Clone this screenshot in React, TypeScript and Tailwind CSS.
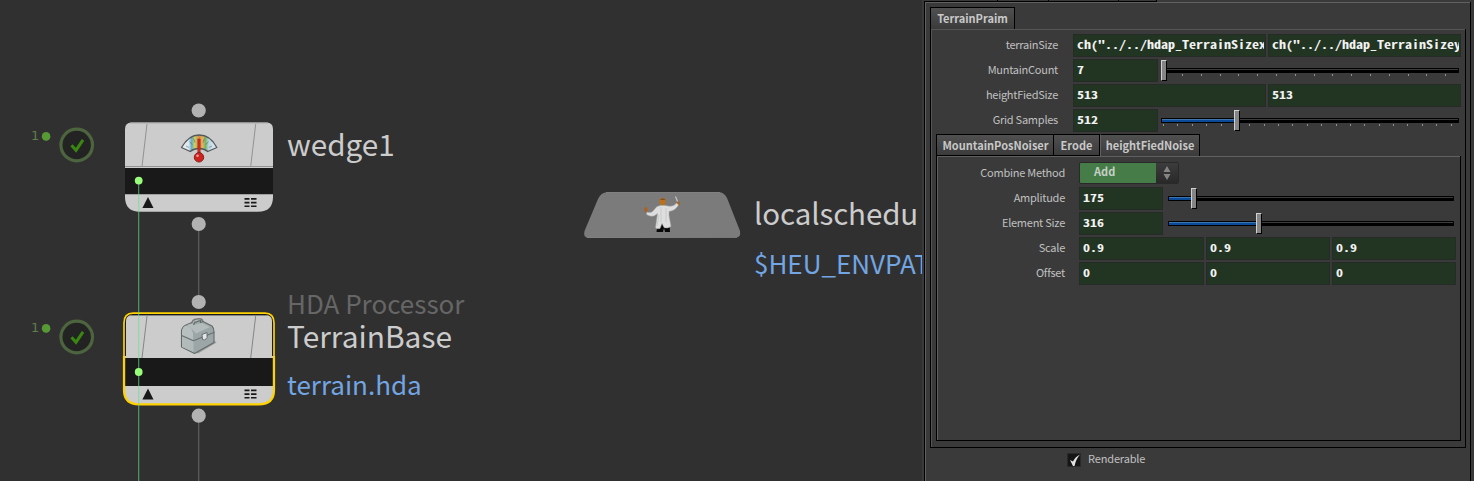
import React from "react";

const SANS = "font-['Noto_Sans_CJK_SC',sans-serif]";
const MONO = "font-['Noto_Sans_Mono_CJK_SC','DejaVu_Sans_Mono',monospace]";

function StatusBadge({ className }: { className: string }) {
  return (
    <div className={`absolute left-[30px] ${className}`}>
      <svg width="66" height="36" viewBox="0 0 66 36" className="block">
        <circle cx="16.1" cy="9.4" r="4.3" fill="#579a35" />
        <circle cx="46.7" cy="18" r="15.8" fill="#232323" stroke="#4c653f" strokeWidth="3.2" />
        <path d="M41.5 18.3 L46 23.3 L53 12.8" fill="none" stroke="#398710" strokeWidth="3" />
      </svg>
      <span className="absolute left-px top-0 font-['DejaVu_Sans',sans-serif] text-[13px] leading-[18px] text-[#5f7d4c]">1</span>
    </div>
  );
}

function GaugeIcon() {
  return (
    <g>
      <defs>
        <linearGradient id="dial" x1="0" x2="1">
          <stop offset="0" stopColor="#e8edf2" />
          <stop offset=".2" stopColor="#dfe8ee" />
          <stop offset=".29" stopColor="#65a9c4" />
          <stop offset=".37" stopColor="#c6d464" />
          <stop offset=".5" stopColor="#d9854b" />
          <stop offset=".6" stopColor="#e6b45c" />
          <stop offset=".68" stopColor="#72b66a" />
          <stop offset=".77" stopColor="#b9d5e4" />
          <stop offset="1" stopColor="#eceff3" />
        </linearGradient>
      </defs>
      <path d="M181.500 147.500 C187 138 193 135 199 135 C206 135 212 138 216.800 147.500 L207.800 151.500 C203 147.500 195 147.500 190.200 151.500 Z" fill="url(#dial)" stroke="#55595b" strokeWidth="1.300" strokeLinejoin="round" />
      <path d="M186 146 l3 1.500 M189.500 141.500 l2.500 3 M193.500 138.500 l1.500 4 M204.500 138.500 l-1.500 4 M208.500 141.500 l-2.500 3 M212 146 l-3 1.500" stroke="#3f4747" strokeWidth=".8" opacity=".55" />
      <path d="M197.800 139 h2.400 v15 h-2.400 z" fill="#d42c24" stroke="#92251f" strokeWidth=".5" />
      <circle cx="199" cy="157.300" r="4.700" fill="#cf231f" stroke="#85211f" strokeWidth="1" />
      <circle cx="197.500" cy="155.800" r="1.300" fill="#f39b91" />
    </g>
  );
}

function ToolboxIcon() {
  return (
    <g strokeLinejoin="round" transform="translate(0 .5)">
      <path d="M193 351 L214 340 L216.500 342 L198 353 Z" fill="#777" opacity=".6" />
      <path d="M192.800 325 v-2.500 q0-2.500 3-3 l3.500-.5 q3 0 3 3 v2" fill="none" stroke="#777c7c" strokeWidth="2.800" />
      <path d="M193 325 v-2.500 q0-2 3-2.500 l3-.5 q2.500 0 2.800 2" fill="none" stroke="#c1c6c6" strokeWidth="1" />
      <path d="M181.500 335 v-5 q1-4 4.500-5.500 l6-2.500 v2.500 l2.500-1 v-1.500 l6-2 v2 l2.500-1 9 4.500 q2 2 2 6 v10.500 l-19.500 11 -13-6.500 Z" fill="#9da6a6" stroke="#626b6b" strokeWidth="1.100" />
      <path d="M182 334.500 v-4.500 q1-4 4-5 q6 1 7 8 v6.500 Z" fill="#b8bfbf" />
      <path d="M187 324.500 l6-2 v2 l9-2 8 4 -14 6.500 q-4-5-9-8.500" fill="#b5bcbc" />
      <path d="M182 335.500 l11.500 5 v11 l-11.500-5 Z" fill="#b2baba" />
      <path d="M181.500 335 l12 5.300 21-8.500" fill="none" stroke="#697272" strokeWidth="1.200" />
      <path d="M202 334 l5-2 v5 q-2 4-4.500 2 Z" fill="#e3e7e7" stroke="#5c6565" strokeWidth=".9" />
    </g>
  );
}

function FooterGlyphs({ y }: { y: number }) {
  return (
    <g fill="#191919">
      <path d={`M142.400 ${y + 11} L148 ${y} L153.500 ${y + 11} Z`} />
      <path
        transform={`translate(244 ${y})`}
        d="M.5 1h5v1.700h-5z M.5 4.700h5v1.700h-5z M.5 8.400h5v1.700h-5z M7 1h5.500v1.700h-5.500z M7 4.700h5.500v1.700h-5.500z M7 8.400h5.500v1.700h-5.500z"
      />
    </g>
  );
}

function Graph() {
  return (
    <svg width="760" height="481" viewBox="0 0 760 481" className="absolute left-0 top-0">
      <path d="M198.700 224 V302 M198.700 416 V481" stroke="#5b5b5b" strokeWidth="1.300" />
      <g fill="#b2b2b2">
        <circle cx="198.700" cy="110.500" r="7.100" />
        <circle cx="198.700" cy="224" r="7.100" />
        <circle cx="198.700" cy="302" r="7.100" />
        <circle cx="198.700" cy="415.700" r="7.100" />
      </g>
      <path d="M125 168 V129 Q125 122.500 131.500 122.500 H266.500 Q273 122.500 273 129 V168 Z" fill="#cccccc" />
      <path d="M130 123 H268" stroke="#a9a9a9" />
      <path d="M147 124 L142 166.500 M255.700 124 L250.700 166.500 M125 166.500 H273" stroke="#929292" strokeWidth="1" />
      <path d="M125 168 H273 V194 H125 Z" fill="#191919" />
      <path d="M125 194.300 H273 V197 Q273 211.700 258 211.700 H140 Q125 211.700 125 197 Z" fill="#cccccc" />
      <path d="M125 194.500 H273" stroke="#a0a0a0" />
      <GaugeIcon />
      <FooterGlyphs y={197} />

      <path d="M124 357 V323 Q124 313.200 133 313.200 H265 Q274 313.200 274 323 V357" fill="#191919" stroke="#ffd200" strokeWidth="1.700" />
      <path d="M124 356 V390 Q124 404.300 139 404.300 H259 Q274 404.300 274 390 V356" fill="#cccccc" stroke="#ffd200" strokeWidth="2.200" />
      <path d="M126 358 V321 Q126 315.200 132 315.200 H266 Q272 315.200 272 321 V358 Z" fill="#cccccc" />
      <path d="M131 315.500 H267 M147 316 L142 358 M255.700 316 L250.700 358" stroke="#858585" fill="none" />
      <path d="M125.200 358 H272.800 V386 H125.200 Z" fill="#191919" />
      <ToolboxIcon />
      <FooterGlyphs y={388.500} />

      <path d="M138.700 181 V481" stroke="#69e08d" strokeOpacity=".65" strokeWidth="1.100" />
      <circle cx="138.700" cy="180.600" r="3.900" fill="#97ff79" />
      <circle cx="138.700" cy="372" r="3.900" fill="#97ff79" />

      <path d="M598 199 Q601 192.500 607 192.300 H719 Q724 192.300 727 198 L740 231 Q741 237 737 237.300 L588 237.700 Q583 237.500 584.500 231 Z" fill="#7b7b7b" />
      <path d="M606 192.500 H720 M587 237.500 H737" stroke="#8d8d8d" strokeWidth=".7" />
      <g>
        <path d="M657.500 223 h12 l.5 9 h-5 l-1-4 -1 4 h-6.500 z" fill="#080808" />
        <path d="M675.500 196.500 l2.500 6" stroke="#c3c7ca" strokeWidth="1.200" />
        <ellipse cx="678.300" cy="203.500" rx="1.800" ry="2.300" fill="#a5652b" />
        <ellipse cx="645.800" cy="209.500" rx="2" ry="2.500" fill="#a5652b" />
        <path d="M657 206.500 l5-1.500 6 1 q5.500 1 8.500-3 l2 2 q-3 5.500-9.500 6.500 l0 4 2 11 q-4 2.500-7 1 l-2-4 -2 5 q-4 1-4.500-1 l2-14 q-5 5-11 1 l.5-2.500 q4 1.500 6-1 Z" fill="#dedede" stroke="#a6a6a6" strokeWidth=".5" />
        <path d="M661 207 v15 M666 208 v14 M659 215 l-2 11" stroke="#c2c5c6" strokeWidth=".8" />
        <ellipse cx="662.500" cy="201.600" rx="3.100" ry="3.800" fill="#bb711b" />
        <path d="M659.700 200 q3-3.500 6 0 z" fill="#87511b" />
      </g>
    </svg>
  );
}

function NodeText({ className, children }: { className: string; children: string }) {
  return <span className={`absolute whitespace-nowrap leading-[32px] ${className}`}>{children}</span>;
}

function Field({ value, className }: { value: string; className: string }) {
  return (
    <div className={`flex h-[23px] shrink-0 border border-[#272b27] bg-[#223522] pr-px ${className}`}>
      <div className={`flex-1 overflow-hidden whitespace-pre pl-[2.500px] text-[11px] font-bold leading-[19px] text-[#f2f2f2] ${MONO}`}>
        <span className="inline-block origin-left scale-x-[1.272]">{value}</span>
      </div>
    </div>
  );
}

function Slider({ className, fill, ticks, pitch, start }: { className: string; fill: number; ticks?: number; pitch?: number; start?: number }) {
  return (
    <div className={`relative flex h-[23px] shrink-0 flex-col pt-[9px] ${className}`}>
      <div className="flex h-[5px] rounded-[1px] border-y border-black bg-black">
        <div className="ml-px h-[3px] border-t border-[#3c76ad] bg-[#0b4a98]" style={{ width: fill }} />
        <div className="mr-px h-px grow bg-[#3c3c3c]" />
      </div>
      {Array.from({ length: ticks ?? 0 }, (_, i) => (
        <span key={i} className="absolute top-[15px] h-[2px] w-px bg-[#929292]" style={{ left: Math.round((start ?? 0) + i * (pitch ?? 0)) }} />
      ))}
      <span className="absolute top-px h-[21px] w-[6px] border border-b-black border-l-[#d0d0d0] border-r-black border-t-[#d0d0d0] bg-[#858585]" style={{ left: fill }} />
    </div>
  );
}

function Row({ label, labelWidth, children }: { label: string; labelWidth: string; children: React.ReactNode }) {
  return (
    <div className="flex h-[25px] items-start">
      <span className={`shrink-0 text-right text-[11px] leading-[21px] tracking-[-0.25px] text-[#c0c0c0] ${labelWidth}`}>{label}</span>
      {children}
    </div>
  );
}

function Tab({ children, className }: { children: string; className: string }) {
  return (
    <div className={`flex shrink-0 items-center justify-center border-r border-t border-black bg-gradient-to-b from-[#505050] to-[#3b3b3b] text-[11px] font-bold leading-none text-[#c8c8c8] ${className}`}>
      {children}
    </div>
  );
}

export default function App() {
  return (
    <div className={`flex h-[481px] w-[1474px] overflow-hidden bg-[#303030] ${SANS}`}>
      <main className="relative h-full w-[922px] shrink-0 overflow-hidden">
        <Graph />
        <StatusBadge className="top-[127px]" />
        <StatusBadge className="top-[318.500px]" />
        <NodeText className="left-[287px] top-[128px] text-[29.700px] text-[#cccccc]">wedge1</NodeText>
        <NodeText className="left-[287px] top-[287px] text-[26px] text-[#666666]">HDA Processor</NodeText>
        <NodeText className="left-[287px] top-[319px] text-[29.900px] text-[#cccccc]">TerrainBase</NodeText>
        <NodeText className="left-[287px] top-[368px] text-[26px] text-[#73a5e3]">terrain.hda</NodeText>
        <NodeText className="left-[754px] top-[196px] text-[29.500px] tracking-[-0.1px] text-[#cccccc]">localschedu</NodeText>
        <NodeText className="left-[754px] top-[247px] text-[26px] text-[#73a5e3]">$HEU_ENVPAT</NodeText>
      </main>

      <aside className="flex h-full w-[552px] shrink-0 flex-col bg-[#3a3a3a] pl-[2px]">
        <div className="flex h-[2px] w-[233px] shrink-0 border-b border-black">
          <div className="w-[74px] border-r border-black" />
          <div className="w-[51px] border-r border-black" />
          <div className="w-[70px] border-r border-black" />
          <div className="w-[38px] border-r border-black" />
        </div>
        <div className="flex w-[547px] grow flex-col border-l border-r border-black">
          <div className="flex grow flex-col border-l border-t border-[#606060] pl-[4px] pt-[4px]">
            <Tab className="h-[22px] w-[85px] border-l">TerrainPraim</Tab>
            <div className="flex h-[419px] w-[536px] shrink-0 border-b border-l border-r border-black">
              <div className="flex w-full flex-col border-l border-t border-[#555] pt-[4px]">
                <Row label="terrainSize" labelWidth="w-[126px] mr-[15px]">
                  <Field value={'ch("../../hdap_TerrainSizex")'} className="w-[193px]" />
                  <Field value={'ch("../../hdap_TerrainSizey")'} className="ml-[2px] w-[193px]" />
                </Row>
                <Row label="MuntainCount" labelWidth="w-[126px] mr-[15px]">
                  <Field value="7" className="w-[85px]" />
                  <Slider className="ml-[3px] w-[298px]" fill={0} ticks={15} pitch={18.8} start={21} />
                </Row>
                <Row label="heightFiedSize" labelWidth="w-[126px] mr-[15px]">
                  <Field value="513" className="w-[193px]" />
                  <Field value="513" className="ml-[2px] w-[193px]" />
                </Row>
                <Row label="Grid Samples" labelWidth="w-[126px] mr-[15px]">
                  <Field value="512" className="w-[85px]" />
                  <Slider className="ml-[3px] w-[298px]" fill={73} ticks={21} pitch={14.38} start={2} />
                </Row>
                <div className="ml-[4px] flex h-[22px] w-[264px] shrink-0">
                  <Tab className="h-[22px] w-[118px] border-b border-l pl-px">MountainPosNoiser</Tab>
                  <Tab className="h-[22px] w-[46px] border-b">Erode</Tab>
                  <Tab className="h-[22px] w-[100px] border-l border-l-[#606060]">heightFiedNoise</Tab>
                </div>
                <div className="ml-[4px] flex h-[285px] w-[525px] shrink-0 border-b border-l border-r border-black">
                  <div className="flex w-full flex-col border-l border-t border-[#606060] pt-[5px]">
                    <Row label="Combine Method" labelWidth="w-[127px] mr-[14px]">
                      <div className="flex h-[22px] w-[100px] overflow-hidden rounded-[2px] border border-[#292929] bg-[#303030]">
                        <span className="w-[76px] bg-[#467c48] pl-[14px] text-[11px] font-bold leading-[17px] text-[#c6d0c6]">Add</span>
                        <span className="flex grow flex-col items-center justify-center bg-gradient-to-b from-[#3c3c3c] to-[#292929]">
                          <svg width="8" height="14" viewBox="0 0 8 14">
                            <path d="M.5 6 L4 0 L7.500 6Z M.5 8 H7.500 L4 14Z" fill="#858585" />
                          </svg>
                        </span>
                      </div>
                    </Row>
                    <Row label="Amplitude" labelWidth="w-[127px] mr-[14px]">
                      <Field value="175" className="w-[84px]" />
                      <Slider className="ml-[5px] w-[286px]" fill={23} />
                    </Row>
                    <Row label="Element Size" labelWidth="w-[127px] mr-[14px]">
                      <Field value="316" className="w-[84px]" />
                      <Slider className="ml-[5px] w-[286px]" fill={88} />
                    </Row>
                    {[["Scale", "0.9"], ["Offset", "0"]].map(([label, value]) => (
                      <Row key={label} label={label} labelWidth="w-[127px] mr-[14px]">
                        <Field value={value} className="w-[125px]" />
                        <Field value={value} className="ml-[2px] w-[124px]" />
                        <Field value={value} className="ml-[2px] w-[124px]" />
                      </Row>
                    ))}
                  </div>
                </div>
              </div>
            </div>
            <label className="ml-[137px] mt-[5px] flex h-[14px] items-center gap-[7px] text-[11px] leading-none tracking-[-0.15px] text-[#c0c0c0]">
              <span className="flex h-[14px] w-[14px] items-center justify-center border border-[#292929] bg-[#151515]">
                <svg width="13" height="13" viewBox="0 0 13 13" className="shrink-0">
                  <path d="M2 6 L5 7.500 Q7 3 12 .5 Q8 5 6.500 12 H5 Z" fill="#e2e2e2" />
                </svg>
              </span>
              <span className="pb-[3px]">Renderable</span>
            </label>
          </div>
        </div>
      </aside>
    </div>
  );
}
